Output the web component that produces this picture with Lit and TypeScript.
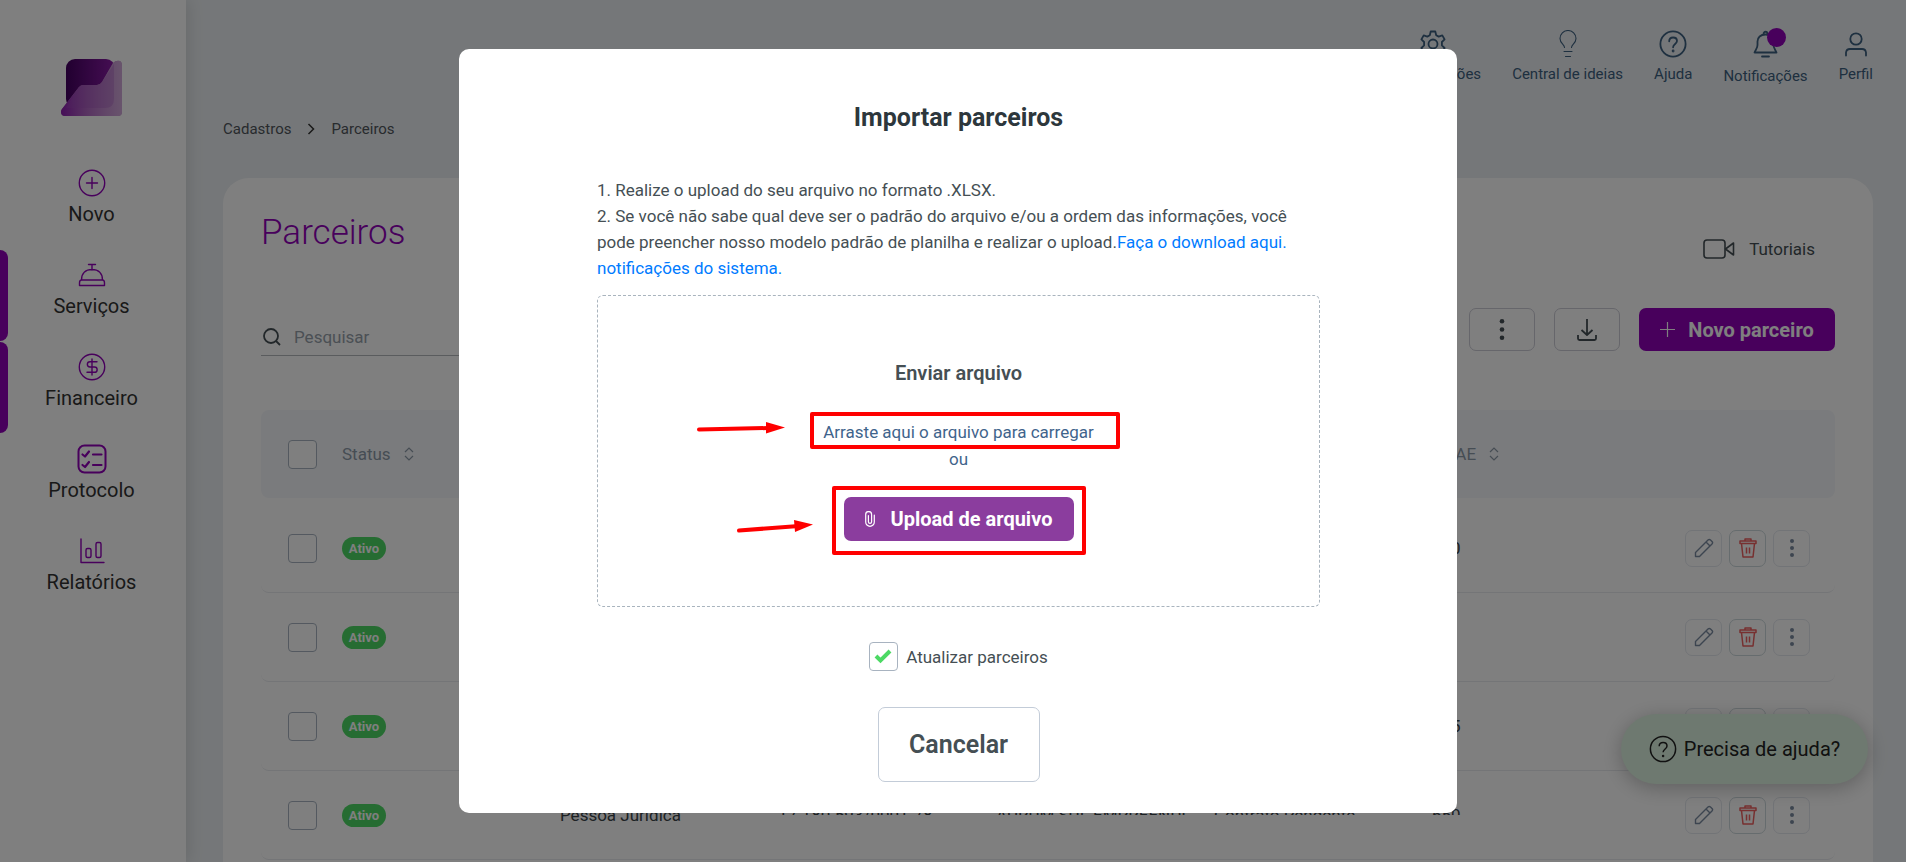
import { LitElement, html, css, svg, nothing } from "lit";
import { customElement } from "lit/decorators.js";

const chevrons = html`<svg class="sort" width="10" height="14" viewBox="0 0 10 14" fill="none" stroke="currentColor" stroke-width="1.2"><path d="M1 5 5 1l4 4M1 9l4 4 4-4"/></svg>`;

const dots = (size: number, r: number) => html`<svg width="6" height="${size}" viewBox="0 0 6 ${size}" fill="currentColor">
  <circle cx="3" cy="${r}" r="${r}"/><circle cx="3" cy="${size / 2}" r="${r}"/><circle cx="3" cy="${size - r}" r="${r}"/></svg>`;

const navIcons = {
  novo: svg`<circle cx="15" cy="15" r="12.7"/><path d="M15 9.500v11M9.500 15h11"/>`,
  servicos: svg`<path d="M11.500 4.500h7M15 4.500V10M4.500 20C4.500 13 9 9.500 15 9.500S25.500 13 25.500 20M4.500 20h21c1 0 2 1 2 3v2.500h-25V23c0-2 1-3 2-3Z"/>`,
  financeiro: svg`<circle cx="15" cy="15" r="12.700"/><path d="M15 7v16M20 9.700h-7a2.650 2.650 0 0 0 0 5.300h4.500a2.650 2.650 0 0 1 0 5.300H10"/>`,
  protocolo: svg`<rect x="1.500" y="1.500" width="27" height="27" rx="6" stroke-width="2"/><path stroke-width="2.200" d="m5.500 10.500 2.500 2 4-5M16 10.500h8.500M5.500 21l2.500 2 4-5M16 21h8.500"/>`,
  relatorios: svg`<path d="M4 3v23.500h23"/><rect x="9" y="12.500" width="5" height="9" rx="1.500"/><rect x="19" y="6.500" width="5" height="15" rx="1.500"/>`,
};

const nav = [
  { label: "Novo", icon: navIcons.novo, active: false },
  { label: "Serviços", icon: navIcons.servicos, active: true },
  { label: "Financeiro", icon: navIcons.financeiro, active: true },
  { label: "Protocolo", icon: navIcons.protocolo, active: false },
  { label: "Relatórios", icon: navIcons.relatorios, active: false },
];

const question = svg`<circle cx="14" cy="14" r="12.600"/><path d="M10.200 11.300c0-2.300 1.700-3.800 3.900-3.800s3.900 1.400 3.900 3.500c0 3-3.900 3-3.900 6.300"/><circle cx="14.100" cy="21" r=".5" fill="currentColor"/>`;

const topItems = [
  { label: "Configurações", badge: false, thin: false, icon: svg`<path d="M11.700 1.500h4.600l.9 3.700 2.500 1.400 3.600-1.200 2.300 4-2.700 2.600v3.400l2.700 2.600-2.300 4-3.600-1.200-2.500 1.400-.9 3.700h-4.600l-.9-3.700-2.500-1.400-3.600 1.200-2.300-4 2.700-2.600V12L2.400 9.400l2.300-4 3.600 1.200 2.500-1.400z"/><circle cx="14" cy="14" r="4.500"/>` },
  { label: "Central de ideias", badge: false, thin: true, icon: svg`<path d="M10.500 17.500c0-3-4.500-4-4.500-9a8 8 0 0 1 16 0c0 5-4.500 6-4.500 9M10 21.500h8M11.500 26.500h5"/>` },
  { label: "Ajuda", badge: false, thin: false, icon: question },
  { label: "Notificações", badge: true, thin: false, icon: svg`<path d="M2.500 22.500h22c-1-3-3-4-3-7.500v-3.500c0-4-3-7-8-7s-8 3-8 7V15c0 3.500-2 4.500-3 7.500ZM11.500 4c0-3 4-3 4 0M10 26.500h7"/>` },
  { label: "Perfil", badge: false, thin: false, icon: svg`<circle cx="14" cy="9" r="5.700"/><path d="M4 25.500v-3a4 4 0 0 1 4-3.500h12a4 4 0 0 1 4 3.500v3"/>` },
];

const columns = ["Status", "Tipo", "CNPJ/CPF", "Nome", "Regime", "CNAE"];

const rows = [
  ["Pessoa Jurídica", "17.180.593/0001-44", "NORTE SUL LTDA", "Lucro Presumido", "490"],
  ["Pessoa Física", "", "", "", ""],
  ["Pessoa Jurídica", "17.180.593/0001-61", "OESTE LTDA", "Lucro Presumido", "625"],
  ["Pessoa Jurídica", "17.180.593/0001-78", "AURUM SUL EMPREENDI", "Contrato Pendente", "650"],
];

@customElement("app-root")
export class AppRoot extends LitElement {
  static styles = css`
    :host {
      display: block;
      height: 100vh;
      overflow: hidden;
      position: relative;
      font-family: Roboto, "Liberation Sans", sans-serif;
      font-size: 17px;
      color: #454f54;
      background: #ebeff2;
    }
    * { box-sizing: border-box; }
    button, input { font: inherit; color: inherit; margin: 0; }
    button { cursor: pointer; background: none; display: flex; align-items: center; justify-content: center; padding: 0; }
    a { color: inherit; text-decoration: none; }
    svg { flex: none; display: block; }
    .layout { display: grid; grid-template-columns: 186px 1fr; height: 100%; }

    .sidebar { background: #fff; box-shadow: 2px 0 16px rgba(0, 0, 0, .12); padding-top: 59px; z-index: 1; }
    .logo { display: block; width: 62px; margin: 0 auto 41px 61px; }
    .nav { list-style: none; margin: 0; padding: 0; }
    .nav-link { display: flex; flex-direction: column; align-items: center; gap: 2px; height: 92px; padding: 10px 3px 0 0; font-size: 20px; line-height: 28px; color: #333; position: relative; }
    .nav-link svg { fill: none; stroke: #9000b8; stroke-width: 1.4; stroke-linecap: round; stroke-linejoin: round; }
    .nav-link.active::before { content: ""; position: absolute; left: 0; top: 0; width: 8px; height: 91px; border-radius: 0 8px 8px 0; background: #9000b8; }

    .main { padding: 0 33px 0 37px; display: flex; flex-direction: column; min-width: 0; }
    .topbar { display: flex; justify-content: flex-end; gap: 31px; height: 119px; padding-top: 30px; font-size: 15px; line-height: 20px; color: #3d6080; }
    .top-item { display: flex; flex-direction: column; align-items: center; gap: 6px; position: relative; height: max-content; }
    .top-item.badged { gap: 8px; }
    .top-item svg { fill: none; stroke: currentColor; stroke-width: 1.8; stroke-linecap: round; stroke-linejoin: round; }
    .top-item.thin svg { stroke-width: 1.1; }
    .dot { position: absolute; right: 22px; top: -2px; width: 19px; height: 19px; border-radius: 50%; background: #9000b8; }
    .crumbs { display: flex; align-items: center; gap: 16px; font-size: 15px; line-height: 20px; color: #50565c; margin-bottom: 39px; }

    .card { flex: 1; background: #fff; border-radius: 26px 26px 0 0; padding: 31px 38px 0; }
    .card-head { display: flex; justify-content: space-between; }
    h1 { margin: 0; font-weight: 300; font-size: 35px; line-height: 48px; color: #9000b8; }
    .tutorials { display: flex; align-items: center; gap: 14px; height: 24px; margin: 28px 20px 0 0; }
    .tools { display: flex; justify-content: space-between; align-items: flex-start; margin: 47px 0 54px; }
    .search { display: flex; align-items: center; gap: 13px; width: 400px; height: 48px; padding: 11px 0 0 2px; border-bottom: 1px solid #b5b8bc; }
    .search input { border: 0; outline: 0; padding: 0; background: none; flex: 1; line-height: 24px; }
    .search input::placeholder { color: #96a0aa; opacity: 1; }
    .actions { display: flex; gap: 19px; }
    .tool { width: 66px; height: 43px; border: 1px solid #ccccd6; border-radius: 7px; }
    .primary { width: 196px; height: 43px; border: 0; border-radius: 7px; background: #9000b8; color: #fff; font-weight: 700; font-size: 20px; gap: 13px; }

    table, thead, tbody { display: block; }
    tr { display: grid; grid-template-columns: 54px repeat(6, 1fr) 160px; align-items: center; padding: 0 25px 0 27px; height: 89px; border-bottom: 1px solid #e8eaee; border-radius: 8px; }
    thead tr { height: 88px; background: #f5f7fa; border: 0; }
    tbody { margin-top: 6px; }
    th, td { padding: 0; text-align: left; font-weight: 400; white-space: nowrap; min-width: 0; }
    th { color: #8d9aa8; }
    td { color: #3a4449; }
    .th-in { display: flex; align-items: center; gap: 13px; }
    .clip { overflow: hidden; height: 11px; line-height: 22px; align-self: start; margin-top: 33px; }
    .check { appearance: none; display: block; width: 29px; height: 29px; border: 1px solid #a8b3c0; border-radius: 4px; background: #fff; }
    .pill { display: inline-block; width: 44px; border-radius: 12px; background: #4cd964; color: #fff; font-weight: 700; font-size: 13px; line-height: 23px; text-align: center; vertical-align: middle; }
    .row-actions { display: flex; gap: 7px; justify-content: flex-end; color: #7a8ba0; }
    .icon-btn { width: 37px; height: 37px; border: 1px solid #e4e8ee; border-radius: 7px; }
    .icon-btn.danger { color: #ee6060; border-color: #ccd8dc; }

    .help { position: absolute; right: 38px; bottom: 78px; width: 247px; height: 70px; border: 0; border-radius: 35px; background: #dcf2e0; color: #222; font-size: 20px; gap: 7px; box-shadow: 0 4px 20px rgba(0, 0, 0, .25); z-index: 2; }

    .overlay { position: absolute; inset: 0; z-index: 3; background: rgba(0, 0, 0, .5); display: flex; align-items: center; justify-content: center; padding: 0 0 0 10px; }
    .modal { width: 100%; max-width: 998px; background: #fff; border-radius: 10px; padding: 53px 137px 31px 138px; display: flex; flex-direction: column; align-items: center; }
    h2 { margin: 0 0 43px; font-size: 25px; line-height: 32px; font-weight: 700; color: #2d373c; }
    .steps { margin: 0 0 14px; width: 100%; line-height: 26px; }
    .steps p { margin: 0; }
    .steps a { color: #007bff; }
    .drop { position: relative; width: 100%; height: 312px; border: 1px dashed #a9b4be; border-radius: 6px; display: flex; flex-direction: column; align-items: center; padding-top: 63px; line-height: 27px; color: #3f648c; }
    h3 { margin: 0 0 32px; font-size: 20px; line-height: 28px; font-weight: 600; color: #454f54; }
    .drop p { margin: 0; }
    .upload { width: 230px; height: 44px; margin-top: 24px; border: 0; border-radius: 7px; background: #8b3d9e; color: #fff; font-size: 20px; font-weight: 700; gap: 16px; }
    .marks { position: absolute; top: 108px; left: calc(50% - 269px); pointer-events: none; }
    .update { display: flex; align-items: center; gap: 8px; margin: 35px 0 36px; }
    .tick { position: relative; display: flex; }
    .tick svg { position: absolute; left: 5px; top: 7px; pointer-events: none; }
    .cancel { width: 162px; height: 75px; border: 1px solid #c3ccd8; border-radius: 7px; font-size: 25px; font-weight: 600; }
  `;

  private renderRow(cells: string[], index: number) {
    const last = index === rows.length - 1;
    return html`<tr>
      <td><input class="check" type="checkbox" aria-label="Selecionar linha" /></td>
      <td><span class="pill">Ativo</span></td>
      ${cells.map((c, i) => html`<td class="${last && i > 0 ? "clip" : nothing}">${c}</td>`)}
      <td class="row-actions">
        <button class="icon-btn" aria-label="Editar"><svg width="20" height="20" viewBox="0 0 20 20" fill="none" stroke="currentColor" stroke-width="1.400" stroke-linejoin="round"><path d="M1.500 18.500v-4L14 2a1.800 1.800 0 0 1 2.500 0L18 3.500A1.800 1.800 0 0 1 18 6L5.500 18.500zM12 4l4 4"/></svg></button>
        <button class="icon-btn danger" aria-label="Excluir"><svg width="18" height="20" viewBox="0 0 18 20" fill="none" stroke="currentColor" stroke-width="1.500" stroke-linejoin="round"><path d="M1 3h16v2.500H1zM6 3V1h6v2M2.500 5.500 4 19h10l1.500-13.500M7.500 9.500v6M10.500 9.500v6"/></svg></button>
        <button class="icon-btn" aria-label="Mais opções">${dots(18, 2)}</button>
      </td>
    </tr>`;
  }

  render() {
    return html`
      <div class="layout">
        <aside class="sidebar">
          <a class="logo" href="#" aria-label="Início">
            <svg width="62" height="58" viewBox="0 0 62 58">
              <defs>
                <linearGradient id="dark"><stop offset="0" stop-color="#430060"/><stop offset="1" stop-color="#8c1ca8"/></linearGradient>
                <linearGradient id="soft"><stop offset="0" stop-color="#8c1cb0"/><stop offset=".4" stop-color="#b060c4" stop-opacity=".9"/><stop offset="1" stop-color="#e0b8e8" stop-opacity=".75"/></linearGradient>
              </defs>
              <rect x="5" y="0" width="49" height="49" rx="9" fill="url(#dark)"/>
              <path d="M52 4q3-3 7-2 2 1 2 5v46q0 4-4 4H4q-4 0-4-4 0-2 1-3l17-22q2-2 4-2h14q3 0 5-3Z" fill="#a67ab0"/>
              <path d="M52 4q3-3 7-2 2 1 2 5v46q0 4-4 4H4q-4 0-4-4 0-2 1-3l17-22q2-2 4-2h14q3 0 5-3Z" fill="url(#soft)"/>
              <path d="M53 5v35q0 9-9 9H5L18 28q2-2 4-2h14q3 0 5-3Z" fill="#a050b8" opacity=".3"/>
            </svg>
          </a>
          <nav><ul class="nav">
            ${nav.map((n) => html`<li><a class="nav-link ${n.active ? "active" : ""}" href="#"><svg width="30" height="30" viewBox="0 0 30 30">${n.icon}</svg>${n.label}</a></li>`)}
          </ul></nav>
        </aside>
        <main class="main">
          <header class="topbar">
            ${topItems.map((t) => html`<a class="top-item ${t.badge ? "badged" : ""} ${t.thin ? "thin" : ""}" href="#">
              <svg width="28" height="28" viewBox="0 0 28 28">${t.icon}</svg>${t.label}${t.badge ? html`<span class="dot"></span>` : nothing}</a>`)}
          </header>
          <nav class="crumbs" aria-label="Trilha">
            <a href="#">Cadastros</a>
            <svg width="8" height="12" viewBox="0 0 8 12" fill="none" stroke="#333" stroke-width="1.500"><path d="m1.500 1 5 5-5 5"/></svg>
            <a href="#">Parceiros</a>
          </nav>
          <section class="card">
            <div class="card-head">
              <h1>Parceiros</h1>
              <a class="tutorials" href="#"><svg width="32" height="20" viewBox="0 0 32 20" fill="none" stroke="currentColor" stroke-width="1.600" stroke-linejoin="round"><rect x="1" y="1" width="21" height="18" rx="3"/><path d="m22.500 10 8-6v12z"/></svg>Tutoriais</a>
            </div>
            <div class="tools">
              <label class="search">
                <svg width="18" height="18" viewBox="0 0 18 18" fill="none" stroke="currentColor" stroke-width="1.800"><circle cx="8" cy="8" r="7"/><path d="m13 13 4 4"/></svg>
                <input type="search" placeholder="Pesquisar" aria-label="Pesquisar" />
              </label>
              <div class="actions">
                <button class="tool" aria-label="Mais opções">${dots(21, 2.3)}</button>
                <button class="tool" aria-label="Baixar"><svg width="20" height="22" viewBox="0 0 20 22" fill="none" stroke="currentColor" stroke-width="1.800" stroke-linejoin="round"><path d="M10 0v15.500M4.500 11l5.500 5 5.500-5M1 16v3.500q0 1.500 1.500 1.500h15q1.500 0 1.500-1.500V16"/></svg></button>
                <button class="primary"><svg width="15" height="15" viewBox="0 0 15 15" stroke="currentColor" stroke-width="1.200"><path d="M7.500 0v15M0 7.500h15"/></svg>Novo parceiro</button>
              </div>
            </div>
            <table>
              <thead><tr>
                <th><input class="check" type="checkbox" aria-label="Selecionar todos" /></th>
                ${columns.map((c) => html`<th><span class="th-in">${c}${chevrons}</span></th>`)}
                <th></th>
              </tr></thead>
              <tbody>${rows.map((r, i) => this.renderRow(r, i))}</tbody>
            </table>
          </section>
        </main>
      </div>

      <button class="help"><svg width="28" height="28" viewBox="0 0 28 28" fill="none" stroke="currentColor" stroke-width="1.500">${question}</svg>Precisa de ajuda?</button>

      <div class="overlay">
        <div class="modal" role="dialog" aria-modal="true" aria-labelledby="title">
          <h2 id="title">Importar parceiros</h2>
          <div class="steps">
            <p>1. Realize o upload do seu arquivo no formato .XLSX.</p>
            <p>2. Se você não sabe qual deve ser o padrão do arquivo e/ou a ordem das informações, você pode preencher nosso modelo padrão de planilha e realizar o upload.<a href="#">Faça o download aqui. notificações do sistema.</a></p>
          </div>
          <div class="drop">
            <h3>Enviar arquivo</h3>
            <p>Arraste aqui o arquivo para carregar</p>
            <p>ou</p>
            <button class="upload"><svg width="10" height="16" viewBox="0 0 10 16" fill="none" stroke="currentColor" stroke-width="1.200" stroke-linecap="round"><path d="M9.300 4v7a4.300 4.300 0 0 1-8.600 0V3.500a2.900 2.900 0 0 1 5.900 0v7.300a1.600 1.600 0 0 1-3.200 0V4.500"/></svg>Upload de arquivo</button>
            <svg class="marks" width="436" height="156" viewBox="0 0 436 156" fill="none" stroke="#f00" stroke-width="4" stroke-linejoin="round" stroke-linecap="round">
              <rect x="122" y="10" width="306" height="33"/>
              <rect x="144" y="84" width="250" height="65"/>
              <path d="M9 25.500 78 24"/><path d="m76 18 19 5.500L76 29.500Z" fill="#f00" stroke="none"/>
              <path d="m49 126.500 60-4.500"/><path d="m104 116 19 4.500-18 7.500Z" fill="#f00" stroke="none"/>
            </svg>
          </div>
          <label class="update">
            <span class="tick"><input class="check" type="checkbox" checked /><svg width="18" height="15" viewBox="0 0 18 15" fill="none" stroke="#4cd964" stroke-width="4"><path d="m2 7 4.500 4.500L16 2"/></svg></span>
            Atualizar parceiros
          </label>
          <button class="cancel">Cancelar</button>
        </div>
      </div>
    `;
  }
}
